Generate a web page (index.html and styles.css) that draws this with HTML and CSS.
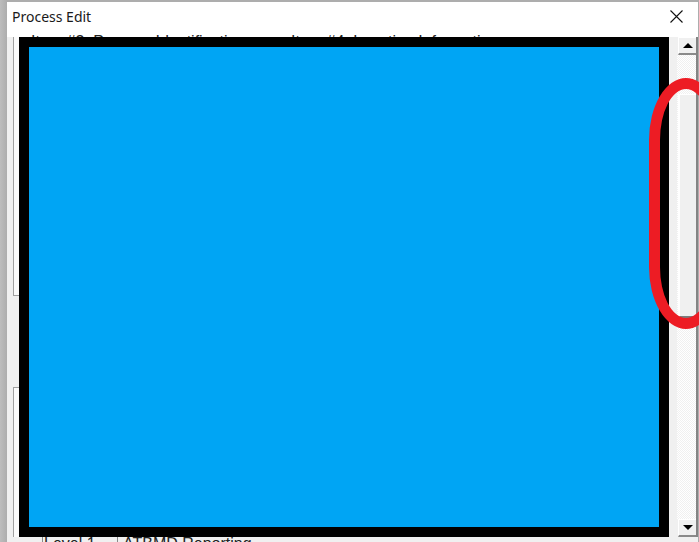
FILE: index.html
```html
<!DOCTYPE html>
<html lang="en">

<head>
    <meta charset="UTF-8">
    <title>Process Edit</title>
    <link rel="stylesheet" href="styles.css">
</head>

<body>

    <div class="window">
        <div class="title-bar">
            <span class="title">Process Edit</span>
            <svg class="close" width="13" height="13" viewBox="0 0 13 13">
                <path d="M0.5 0.5L12.5 12.5M12.5 0.5L0.5 12.5" stroke="#111" stroke-width="1.1" fill="none" />
            </svg>
        </div>

        <!-- text cut off behind the black box -->
        <div class="top-text">
            <span class="item-a">Item #3: Process Identification</span>
            <span class="item-b">Item #4: Location Information</span>
        </div>

        <div class="main">
            <div class="gutter">
                <div class="group group-top"></div>
                <div class="group group-bottom"></div>
            </div>

            <div class="redacted">
                <div class="redacted-fill"></div>
            </div>

            <div class="scrollbar">
                <div class="scroll-btn"><span class="arrow-up"></span></div>
                <div class="track">
                    <div class="thumb"></div>
                </div>
                <div class="scroll-btn"><span class="arrow-down"></span></div>
            </div>

            <div class="right-edge"></div>
        </div>

        <div class="bottom-text">
            <span class="level">Level 1</span>
            <span class="report">ATBMD Reporting</span>
        </div>

        <!-- red marker ring round the scrollbar -->
        <div class="ring"></div>
    </div>

</body>

</html>
```

FILE: styles.css
```css
html,
body {
    margin: 0;
    padding: 0;
}

.window {
    position: relative;
    width: 699px;
    height: 542px;
    box-sizing: border-box;
    padding: 2px 1px 0 7px;
    overflow: hidden;
    display: flex;
    flex-direction: column;
    background: linear-gradient(90deg, #bdbdbd 0, #adadad 7px, #adadad 100%);
    font-family: "Liberation Sans", Arial, sans-serif;
    color: #222;
}

.title-bar {
    height: 33px;
    flex: none;
    box-sizing: border-box;
    display: flex;
    align-items: center;
    justify-content: space-between;
    padding: 0 15px 5px 5px;
    background: #fff;
}

.title {
    font-family: "Noto Sans", sans-serif;
    font-size: 14px;
    color: #1a1a1a;
}

.top-text {
    height: 2px;
    flex: none;
    display: flex;
    overflow: hidden;
    background: #fff;
    font-size: 16px;
    line-height: 13px;
    white-space: nowrap;
}

.item-a {
    margin-left: 24px;
    width: 260px;
}

.main {
    height: 500px;
    flex: none;
    display: flex;
    background: #f0f0f0;
}

.gutter {
    width: 12px;
    flex: none;
    box-sizing: border-box;
    padding-left: 6px;
    display: flex;
    flex-direction: column;
    justify-content: space-between;
}

.group {
    border-left: 1px solid #a0a0a0;
    background: #fbfbfb;
}

.group-top {
    height: 258px;
    border-bottom: 1px solid #a0a0a0;
}

.group-bottom {
    height: 149px;
    border-top: 1px solid #a0a0a0;
}

.redacted {
    width: 650px;
    flex: none;
    box-sizing: border-box;
    border: 10px solid #000;
}

.redacted-fill {
    height: 100%;
    background: #00a5f4;
}

.scrollbar {
    width: 19px;
    flex: none;
    margin-left: 8px;
    display: flex;
    flex-direction: column;
}

.scroll-btn {
    height: 18px;
    flex: none;
    display: flex;
    align-items: center;
    justify-content: center;
    box-sizing: border-box;
    margin-left: 1px;
    background: #f0f0f0;
    border-top: 1px solid #fff;
    border-left: 1px solid #fff;
    border-bottom: 2px solid #8a8a8a;
}

.arrow-up,
.arrow-down {
    width: 0;
    height: 0;
    border-left: 5px solid transparent;
    border-right: 5px solid transparent;
}

.arrow-up {
    border-bottom: 5px solid #000;
}

.arrow-down {
    border-top: 5px solid #000;
}

.track {
    flex: 1;
    padding-top: 39px;
    padding-bottom: 201px;
    background: repeating-conic-gradient(#fff 0 25%, #f0f0f0 0 50%) 0 0 / 2px 2px;
}

.thumb {
    height: 100%;
    box-sizing: border-box;
    margin-left: 1px;
    background: #f0f0f0;
    border-top: 1px solid #fff;
    border-left: 2px solid #fff;
    border-bottom: 2px solid #7c7c7c;
}

.right-edge {
    width: 2px;
    flex: none;
    background: #848484;
}

.bottom-text {
    flex: 1;
    display: flex;
    overflow: hidden;
    background: #f0f0f0;
    font-size: 16px;
    line-height: 13px;
    white-space: nowrap;
}

.level {
    margin-left: 35px;
    width: 73px;
    padding-left: 1px;
    border-left: 1px solid #8a8a8a;
}

.report {
    padding-left: 5px;
    border-left: 1px solid #8a8a8a;
}

.ring {
    position: absolute;
    left: 649px;
    top: 78px;
    width: 74px;
    height: 251px;
    box-sizing: border-box;
    border: 11px solid #ed1c24;
    border-radius: 37px / 62px;
}
```
